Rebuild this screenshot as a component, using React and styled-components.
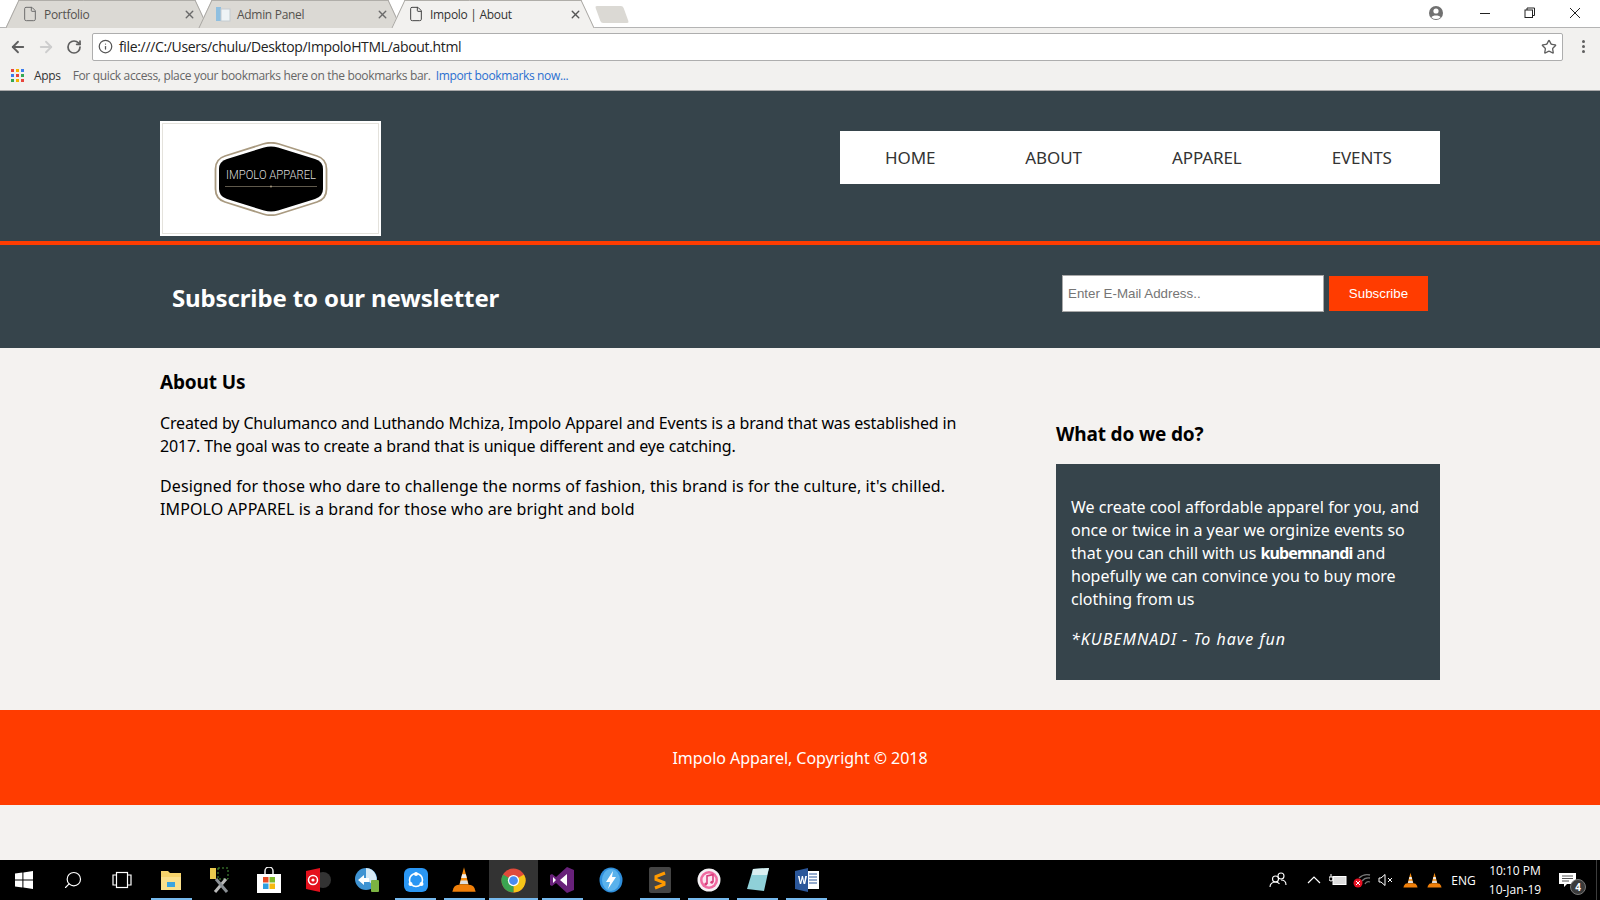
import React from 'react';
import styled, { createGlobalStyle } from 'styled-components';
import { ArrowLeft, ArrowRight, RotateCw, Info, Star, File, Search, X } from 'lucide-react';

const comic = `"Noto Sans", "DejaVu Sans", sans-serif`;
const ui = `"Open Sans", "Noto Sans", sans-serif`;
const charcoal = '#36444b';
const orange = '#ff3c00';
const paper = '#f4f2f0';

const GlobalStyle = createGlobalStyle`
  html, body { margin: 0; padding: 0; background: ${paper}; }
  * { box-sizing: border-box; }
`;

const Screen = styled.div`
  width: 1600px;
  height: 900px;
  display: flex;
  flex-direction: column;
  overflow: hidden;
  background: ${paper};
`;

/* browser chrome */
const TabStrip = styled.div`
  height: 28px;
  background: #fff;
  display: flex;
  align-items: flex-end;
  position: relative;
  padding-left: 6px;
  border-bottom: 1px solid #b4b4b4;
`;

const Tab = styled.div`
  position: relative;
  width: 202px;
  height: 28px;
  margin-bottom: -1px;
  margin-right: -9px;
  display: flex;
  align-items: center;
  padding: 0 12px 0 16px;
  gap: 6px;
  font: 12px ${ui};
  letter-spacing: -0.3px;
  color: ${p => (p.$active ? '#333' : '#55524e')};
  z-index: ${p => (p.$active ? 2 : 1)};
  &::before, &::after {
    content: '';
    position: absolute;
    top: 0;
    bottom: 0;
    width: 55%;
    background: ${p => (p.$active ? '#f2f1ef' : '#dbd9d4')};
    border-top: 1px solid #b0aea9;
    z-index: -1;
  }
  &::before {
    left: 6px;
    transform: skewX(-25deg);
    border-left: 1px solid #a8a6a2;
  }
  &::after {
    right: 6px;
    transform: skewX(25deg);
    border-right: 1px solid #a8a6a2;
  }
`;

const TabTitle = styled.span`
  flex: 1;
  white-space: nowrap;
`;

const NewTab = styled.div`
  width: 28px;
  height: 17px;
  margin: 0 0 4px 13px;
  background: #dbd9d4;
  transform: skewX(20deg);
  border-radius: 2px;
`;

const WindowControls = styled.div`
  position: absolute;
  right: 0;
  top: 0;
  height: 26px;
  padding-right: 3px;
  display: flex;
  align-items: center;
  color: #222;
`;

const WindowButton = styled.div`
  width: 45px;
  height: 26px;
  margin-right: ${p => p.$gap || 0}px;
  display: flex;
  align-items: center;
  justify-content: center;
`;

const Toolbar = styled.div`
  height: 36px;
  background: #f2f1ef;
  display: flex;
  align-items: center;
  padding: 1px 15px 0 4px;
`;

const NavButton = styled.div`
  width: 28px;
  display: flex;
  justify-content: center;
  color: ${p => (p.$off ? '#cdcdcd' : '#5f5f5f')};
`;

const Omnibox = styled.div`
  flex: 1;
  height: 28px;
  margin: 0 19px 0 4px;
  background: #fff;
  border: 1px solid #aeaeae;
  border-radius: 2px;
  display: flex;
  align-items: center;
  padding: 0 5px;
  font: 14px ${ui};
  color: #222;
  gap: 6px;
`;

const Url = styled.span`
  flex: 1;
  letter-spacing: -0.34px;
`;

const Dots = styled.div`
  display: flex;
  flex-direction: column;
  gap: 2px;
  & > i {
    width: 3px;
    height: 3px;
    border-radius: 50%;
    background: #5f5f5f;
  }
`;

const Bookmarks = styled.div`
  height: 27px;
  background: #f2f1ef;
  border-bottom: 1px solid #aaa;
  display: flex;
  align-items: center;
  padding: 0 0 4px 11px;
  font: 12px ${ui};
  color: #666;
  letter-spacing: -0.34px;
`;

const AppsGrid = styled.div`
  display: grid;
  grid-template-columns: repeat(3, 3px);
  grid-auto-rows: 3px;
  gap: 2px;
  margin-right: 10px;
`;

const AppsDot = styled.i`
  background: ${p => p.$c};
`;

const AppsLabel = styled.span`
  color: #333;
  margin-right: 12px;
`;

const ImportLink = styled.span`
  color: #2a6fd0;
  margin-left: 5px;
`;

/* page */
const Page = styled.div`
  flex: 1;
  display: flex;
  flex-direction: column;
  background: ${paper};
`;

const Container = styled.div`
  width: 1280px;
  margin: 0 auto;
`;

const Header = styled.header`
  background: ${charcoal};
  border-bottom: 4px solid ${orange};
  height: 154px;
  padding-top: 30px;
`;

const HeaderRow = styled(Container)`
  display: flex;
  justify-content: space-between;
  align-items: flex-start;
`;

const LogoBox = styled.div`
  width: 221px;
  height: 115px;
  background: #fff;
  border: 2px solid #fff;
  outline: 1px solid #e4e2dc;
  outline-offset: -3px;
  display: flex;
  align-items: center;
  justify-content: center;
`;

const Nav = styled.nav`
  margin-top: 10px;
  height: 53px;
  width: 600px;
  background: #fff;
  display: flex;
  align-items: center;
  padding-left: 45px;
  gap: 90px;
`;

const NavLink = styled.a`
  font: 17px ${comic};
  letter-spacing: -0.1px;
  color: #333;
  white-space: nowrap;
`;

const Newsletter = styled.section`
  background: ${charcoal};
  height: 103px;
`;

const NewsletterRow = styled(Container)`
  display: flex;
  justify-content: space-between;
  align-items: flex-start;
  padding: 30px 12px 0 12px;
`;

const NewsletterTitle = styled.h1`
  margin: 7px 0 0;
  font: bold 24px/32px ${comic};
  color: #fff;
  letter-spacing: -0.13px;
`;

const SubscribeForm = styled.form`
  display: flex;
  align-items: center;
  gap: 5px;
`;

const EmailInput = styled.input`
  width: 262px;
  height: 37px;
  border: 1px solid #a9a9a9;
  padding: 0 5px;
  font: 13.33px "Liberation Sans", sans-serif;
  background: #fff;
  &::placeholder { color: #757575; opacity: 1; }
`;

const SubscribeButton = styled.button`
  width: 99px;
  height: 35px;
  border: 0;
  background: ${orange};
  color: #fff;
  font: 13.33px "Liberation Sans", sans-serif;
`;

const Content = styled(Container)`
  height: 362px;
  display: flex;
  justify-content: space-between;
  padding-top: 21px;
`;

const Main = styled.div`
  width: 810px;
`;

const Aside = styled.aside`
  width: 384px;
  padding-top: 52px;
`;

const Heading = styled.h2`
  margin: 0 0 17px;
  font: bold 19px/26px ${comic};
  letter-spacing: -0.15px;
  color: #000;
`;

const Para = styled.p`
  margin: 0 0 17px;
  font: 16px/23px ${comic};
  letter-spacing: ${p => p.$track || 0}px;
  color: #000;
`;

const Panel = styled.div`
  background: ${charcoal};
  padding: 32px 15px 0;
  height: 216px;
  & > p {
    color: #fff;
  }
  & > p:last-child {
    margin-bottom: 0;
  }
`;

const Squeezed = styled.b`
  letter-spacing: -0.9px;
`;

const Footer = styled.footer`
  background: ${orange};
  height: 95px;
  display: flex;
  align-items: center;
  justify-content: center;
  font: 16px ${comic};
  letter-spacing: -0.05px;
  color: #fff;
`;

/* windows taskbar */
const Taskbar = styled.div`
  height: 40px;
  background: #000;
  display: flex;
  align-items: stretch;
  margin-top: auto;
  color: #fff;
`;

const TaskButton = styled.div`
  position: relative;
  width: 48.9px;
  display: flex;
  align-items: center;
  justify-content: center;
  background: ${p => (p.$active ? '#333' : 'transparent')};
  &::after {
    content: '';
    display: ${p => (p.$open ? 'block' : 'none')};
    position: absolute;
    left: ${p => (p.$active ? 0 : '4px')};
    right: ${p => (p.$active ? 0 : '4px')};
    bottom: 0;
    height: 2px;
    background: #76b9ed;
  }
`;

const Tray = styled.div`
  margin-left: auto;
  display: flex;
  align-items: center;
  font: 12px ${ui};
  color: #fff;
`;

const TrayItem = styled.div`
  width: ${p => p.$w || 24}px;
  display: flex;
  align-items: center;
  justify-content: center;
`;

const Clock = styled.div`
  width: 68px;
  text-align: center;
  line-height: 19px;
`;

const Badge = styled.span`
  position: absolute;
  left: 11px;
  top: 7px;
  width: 16px;
  height: 16px;
  border-radius: 50%;
  background: #3a3a3a;
  border: 1px solid #777;
  font: bold 10px/14px ${ui};
  text-align: center;
`;

const NotifyWrap = styled.div`
  position: relative;
  width: 32px;
  display: flex;
  justify-content: flex-start;
  margin: 0 5px 0 10px;
`;

const ShowDesktop = styled.div`
  width: 4px;
  height: 40px;
  border-left: 1px solid #3c3c3c;
`;

const Vlc = ({ size = 24 }) => (
  <svg width={size} height={size} viewBox="0 0 24 24">
    <path d="M12 1 L16 16 H8 Z" fill="#f58a0b" />
    <path d="M10.4 7 h3.2 l.8 3.2 h-4.8 Z" fill="#eee" />
    <path d="M9.2 12.4 h5.6 l.8 3 h-7.2 Z" fill="#ddd" />
    <path d="M3 19 q1-3 5-3 h8 q4 0 5 3 l1 3 H2 Z" fill="#f07f09" />
  </svg>
);

const taskIcons = [
  { key: 'start', icon: <svg width="18" height="18" viewBox="0 0 18 18" fill="#fff"><path d="M0 2.6 7.4 1.6v7H0zM8.4 1.4 18 0v8.6H8.4zM0 9.6h7.4v7L0 15.6zM8.4 9.6H18V18l-9.6-1.4z" /></svg> },
  { key: 'search', icon: <Search size={20} color="#fff" strokeWidth={1.4} style={{ transform: 'scaleX(-1)' }} /> },
  { key: 'tasks', icon: <svg width="20" height="20" viewBox="0 0 20 20" fill="none" stroke="#fff" strokeWidth="1.2"><rect x="4.5" y="2.5" width="11" height="15" /><path d="M4 5H1v10h3M16 5h3v10h-3" /></svg> },
  { key: 'files', open: true, icon: <svg width="24" height="24" viewBox="0 0 24 24"><path d="M2 3h7l2 2h11v17H2z" fill="#f6d36b" /><path d="M2 9h20v13H2z" fill="#fbe08c" /><path d="M8 14h8v5H8z" fill="#3ba4e0" /></svg> },
  { key: 'tools', icon: <svg width="26" height="26" viewBox="0 0 26 26"><rect x="3" y="1" width="6" height="11" fill="#e9c94d" /><rect x="11" y="1" width="10" height="11" fill="none" stroke="#4a9a3a" strokeDasharray="2 2" /><path d="M8 25 19 12" stroke="#b9b9b9" strokeWidth="3" /><path d="M20 25 9 12" stroke="#8a8f94" strokeWidth="3" /></svg> },
  { key: 'store', icon: <svg width="24" height="26" viewBox="0 0 24 26"><path d="M8 8V4a4 4 0 0 1 8 0v4" fill="none" stroke="#eee" strokeWidth="1.5" /><rect x="0" y="7" width="24" height="19" fill="#fff" /><rect x="6" y="10" width="5.5" height="5.5" fill="#e74c25" /><rect x="12.5" y="10" width="5.5" height="5.5" fill="#7db928" /><rect x="6" y="16.5" width="5.5" height="5.5" fill="#2d9fe0" /><rect x="12.5" y="16.5" width="5.5" height="5.5" fill="#f6b90f" /></svg> },
  { key: 'music', icon: <svg width="26" height="26" viewBox="0 0 26 26"><circle cx="18" cy="13" r="8" fill="#333" /><path d="M1 4 15 1v24L1 22z" fill="#e4101c" /><circle cx="8" cy="13" r="4.5" fill="none" stroke="#fff" strokeWidth="1.5" /><circle cx="8" cy="13" r="1.6" fill="#fff" /></svg> },
  { key: 'sync', icon: <svg width="26" height="26" viewBox="0 0 26 26"><circle cx="12" cy="12" r="11" fill="#3f93d2" /><path d="M12 1a11 11 0 0 1 8 18L12 12z" fill="#d6e9f5" /><path d="M4 13l6-5v3h5v4h-5v3z" fill="#fff" /><rect x="17" y="13" width="8" height="12" rx="1" fill="#7cb342" /></svg> },
  { key: 'share', open: true, icon: <svg width="26" height="26" viewBox="0 0 26 26"><rect x="1" y="1" width="24" height="24" rx="6" fill="#2a96f3" /><circle cx="13" cy="13" r="6.5" fill="none" stroke="#fff" strokeWidth="1.6" /><circle cx="13" cy="7" r="2" fill="#fff" /><circle cx="7.5" cy="17" r="2" fill="#fff" /><circle cx="18.5" cy="17" r="2" fill="#fff" /></svg> },
  { key: 'vlc', open: true, icon: <Vlc size={28} /> },
  { key: 'chrome', open: true, active: true, icon: <svg width="25" height="25" viewBox="0 0 24 24"><circle cx="12" cy="12" r="11.5" fill="#e04a3a" /><path d="M12 12 22 6.2A11.5 11.5 0 0 1 12 23.5z" fill="#f5c518" /><path d="M12 12 12 23.5A11.5 11.5 0 0 1 2 6.2z" fill="#3ba551" /><circle cx="12" cy="12" r="5.4" fill="#fff" /><circle cx="12" cy="12" r="4.2" fill="#4a8bf0" /></svg> },
  { key: 'vs', open: true, icon: <svg width="24" height="26" viewBox="0 0 24 26"><path d="M17 0 24 3v20l-7 3L6 16l-4 3-2-1V8l2-1 4 3z" fill="#68217a" /><path d="M17 7 10 13l7 6zM3 10v6l3-3z" fill="#fff" /></svg> },
  { key: 'bolt', icon: <svg width="24" height="26" viewBox="0 0 24 26"><ellipse cx="12" cy="13" rx="11.5" ry="12.5" fill="#2f8fdc" /><ellipse cx="12" cy="13" rx="9" ry="11" fill="#5ab2ec" /><path d="M14 4 7 15h4l-2 7 8-12h-4z" fill="#fff" /></svg> },
  { key: 'sublime', open: true, icon: <svg width="24" height="26" viewBox="0 0 24 26"><rect x="1" y="0" width="22" height="26" rx="2" fill="#444" /><path d="M17 6 8 9.500V12.500L16 15.500V17.500L7 21" fill="none" stroke="#ff9a00" strokeWidth="3" /></svg> },
  { key: 'itunes', open: true, icon: <svg width="24" height="24" viewBox="0 0 24 24"><circle cx="12" cy="12" r="11.5" fill="#f4f1f4" /><circle cx="12" cy="12" r="9" fill="#f06aa0" /><circle cx="12" cy="12" r="6.5" fill="#fbe9f2" /><path d="M10 16V8l6-1.4V14" fill="none" stroke="#d93f7e" strokeWidth="1.6" /><circle cx="8.8" cy="16" r="1.5" fill="#d93f7e" /><circle cx="14.8" cy="14.2" r="1.5" fill="#d93f7e" /></svg> },
  { key: 'notes', open: true, icon: <svg width="26" height="26" viewBox="0 0 26 26"><path d="M8 2 24 1 19 24 2 22z" fill="#8fd0d8" /><path d="M8 2 24 1 22 8 7 8z" fill="#d9eef0" /></svg> },
  { key: 'word', open: true, icon: <svg width="24" height="24" viewBox="0 0 24 24"><rect x="9" y="3" width="15" height="18" fill="#fff" /><path d="M0 3 13 0v24L0 21z" fill="#2b579a" /><path d="M3 8h1.6l1 6 1.2-6h1.2l1.2 6 1-6H12l-1.8 8H8.6L7.4 10.8 6.2 16H4.8z" fill="#fff" /><path d="M14 6h8M14 9h8M14 12h8M14 15h8" stroke="#2b579a" /></svg> },
];

const appsColors = ['#e8453c', '#f4b400', '#3b7ded', '#3b7ded', '#e8453c', '#34a853', '#34a853', '#f4b400', '#e8453c'];

function App() {
  return (
    <Screen>
      <GlobalStyle />
      <TabStrip>
        <Tab>
          <File size={16} color="#6e6e6e" strokeWidth={1.5} />
          <TabTitle>Portfolio</TabTitle>
          <X size={13} color="#6a6a6a" strokeWidth={2.6} />
        </Tab>
        <Tab>
          <svg width="16" height="16" viewBox="0 0 16 16"><rect x="1" y="1" width="5" height="14" fill="#8fbfe0" /><rect x="6" y="3" width="9" height="12" fill="#eef3f6" stroke="#c5ccd0" /></svg>
          <TabTitle>Admin Panel</TabTitle>
          <X size={13} color="#6a6a6a" strokeWidth={2.6} />
        </Tab>
        <Tab $active>
          <File size={16} color="#444" strokeWidth={1.5} />
          <TabTitle>Impolo | About</TabTitle>
          <X size={13} color="#555" strokeWidth={2.6} />
        </Tab>
        <NewTab />
        <WindowControls>
          <WindowButton $gap={4}>
            <svg width="16" height="16" viewBox="0 0 16 16"><circle cx="8" cy="8" r="7" fill="#707070" /><circle cx="8" cy="6" r="2.6" fill="#fff" /><path d="M3.4 12.2c1-2.4 8.2-2.4 9.2 0A6.6 6.6 0 0 1 3.4 12.2z" fill="#fff" /></svg>
          </WindowButton>
          <WindowButton>
            <svg width="12" height="12" viewBox="0 0 12 12"><path d="M1 6.5h10" stroke="#222" /></svg>
          </WindowButton>
          <WindowButton>
            <svg width="12" height="12" viewBox="0 0 12 12" fill="none" stroke="#222"><rect x="1" y="3" width="7.5" height="7.5" /><path d="M3 3V1h7.5v7.5H8.5" /></svg>
          </WindowButton>
          <WindowButton>
            <svg width="12" height="12" viewBox="0 0 12 12"><path d="M1 1l10 10M11 1 1 11" stroke="#222" /></svg>
          </WindowButton>
        </WindowControls>
      </TabStrip>

      <Toolbar>
        <NavButton><ArrowLeft size={18} strokeWidth={2.4} /></NavButton>
        <NavButton $off><ArrowRight size={18} strokeWidth={2.4} /></NavButton>
        <NavButton><RotateCw size={16} strokeWidth={2.6} /></NavButton>
        <Omnibox>
          <Info size={15} color="#555" strokeWidth={2} />
          <Url>file:///C:/Users/chulu/Desktop/ImpoloHTML/about.html</Url>
          <Star size={16} color="#5f5f5f" strokeWidth={2} />
        </Omnibox>
        <Dots><i /><i /><i /></Dots>
      </Toolbar>

      <Bookmarks>
        <AppsGrid>
          {appsColors.map((c, i) => <AppsDot key={i} $c={c} />)}
        </AppsGrid>
        <AppsLabel>Apps</AppsLabel>
        For quick access, place your bookmarks here on the bookmarks bar.
        <ImportLink>Import bookmarks now...</ImportLink>
      </Bookmarks>

      <Page>
        <Header>
          <HeaderRow>
            <LogoBox>
              <svg width="116" height="74" viewBox="0 0 116 74">
                <path d="M50 2 Q58 -0.5 66 2 L104 14 Q113.500 17 113.500 27 V47 Q113.500 57 104 60 L66 72 Q58 74.500 50 72 L12 60 Q2.500 57 2.500 47 V27 Q2.500 17 12 14 Z" fill="#fff" stroke="#a99a80" strokeWidth="1.8" />
                <path d="M51 5.500 Q58 3.500 65 5.500 L102 17 Q110 19.500 110 27 V47 Q110 54.500 102 57 L65 68.500 Q58 70.500 51 68.500 L14 57 Q6 54.500 6 47 V27 Q6 19.500 14 17 Z" fill="#000" />
                <text x="58" y="37" textAnchor="middle" fontFamily='"Roboto", sans-serif' fontWeight="300" fontSize="13" fill="#ddd" textLength="90" lengthAdjust="spacingAndGlyphs">IMPOLO APPAREL</text>
                <path d="M12 44.500h92" stroke="#77705f" strokeWidth="0.8" />
                <circle cx="58" cy="44.500" r="1" fill="#a99a80" />
              </svg>
            </LogoBox>
            <Nav>
              <NavLink>HOME</NavLink>
              <NavLink>ABOUT</NavLink>
              <NavLink>APPAREL</NavLink>
              <NavLink>EVENTS</NavLink>
            </Nav>
          </HeaderRow>
        </Header>

        <Newsletter>
          <NewsletterRow>
            <NewsletterTitle>Subscribe to our newsletter</NewsletterTitle>
            <SubscribeForm onSubmit={e => e.preventDefault()}>
              <EmailInput placeholder="Enter E-Mail Address.." />
              <SubscribeButton>Subscribe</SubscribeButton>
            </SubscribeForm>
          </NewsletterRow>
        </Newsletter>

        <Content>
          <Main>
            <Heading>About Us</Heading>
            <Para $track={-0.15}>Created by Chulumanco and Luthando Mchiza, Impolo Apparel and Events is a brand that was established in 2017. The goal was to create a brand that is unique different and eye catching.</Para>
            <Para $track={0.1}>Designed for those who dare to challenge the norms of fashion, this brand is for the culture, it's chilled. IMPOLO APPAREL is a brand for those who are bright and bold</Para>
          </Main>
          <Aside>
            <Heading>What do we do?</Heading>
            <Panel>
              <Para>We create cool affordable apparel for you, and once or twice in a year we orginize events so that you can chill with us <Squeezed>kubemnandi</Squeezed> and hopefully we can convince you to buy more clothing from us</Para>
              <Para $track={1}><i>*KUBEMNADI - To have fun</i></Para>
            </Panel>
          </Aside>
        </Content>

        <Footer>Impolo Apparel, Copyright © 2018</Footer>

        <Taskbar>
          {taskIcons.map(t => (
            <TaskButton key={t.key} $open={t.open} $active={t.active}>{t.icon}</TaskButton>
          ))}
          <Tray>
            <TrayItem $w={48}>
              <svg width="18" height="18" viewBox="0 0 18 18" fill="none" stroke="#fff" strokeWidth="1.1"><circle cx="6.5" cy="8" r="3" /><path d="M1 16c0-3 2-5 5.500-5 1.500 0 3 .6 4 1.800" /><circle cx="12" cy="5" r="3" /><path d="M12 9c3 0 5 1.500 5 5" /></svg>
            </TrayItem>
            <TrayItem $w={24}>
              <svg width="14" height="10" viewBox="0 0 14 10" fill="none" stroke="#fff" strokeWidth="1.200"><path d="M1 8l6-6 6 6" /></svg>
            </TrayItem>
            <TrayItem $w={24}>
              <svg width="18" height="14" viewBox="0 0 18 14" fill="none" stroke="#fff"><rect x="4" y="3.500" width="13" height="8" fill="#ddd" /><path d="M2 1v3M0 4h4v2a2 2 0 0 1-4 0z" /></svg>
            </TrayItem>
            <TrayItem $w={24}>
              <svg width="18" height="16" viewBox="0 0 18 16" fill="none"><path d="M6 6a12 12 0 0 1 11-3M9 9a8 8 0 0 1 8-3M12 12a4 4 0 0 1 5-2" stroke="#777" strokeWidth="1.300" /><circle cx="5" cy="11" r="4.500" fill="#e81123" /><path d="M3 9l4 4M7 9l-4 4" stroke="#fff" /></svg>
            </TrayItem>
            <TrayItem $w={24}>
              <svg width="16" height="14" viewBox="0 0 16 14" fill="none" stroke="#fff"><path d="M1 5v4h2l4 3.500V1.500L3 5z" /><path d="M10 5l4 4M14 5l-4 4" /></svg>
            </TrayItem>
            <TrayItem $w={24}><Vlc size={17} /></TrayItem>
            <TrayItem $w={24}><Vlc size={17} /></TrayItem>
            <TrayItem $w={35}>ENG</TrayItem>
            <Clock>
              <div>10:10 PM</div>
              <div>10-Jan-19</div>
            </Clock>
            <NotifyWrap>
              <svg width="17" height="16" viewBox="0 0 17 16" fill="#fff"><path d="M0 1h17v11H8l-3 3v-3H0z" /><path d="M3 4h11M3 6.500h11M3 9h7" stroke="#555" /></svg>
              <Badge>4</Badge>
            </NotifyWrap>
            <ShowDesktop />
          </Tray>
        </Taskbar>
      </Page>
    </Screen>
  );
}

export default App;
